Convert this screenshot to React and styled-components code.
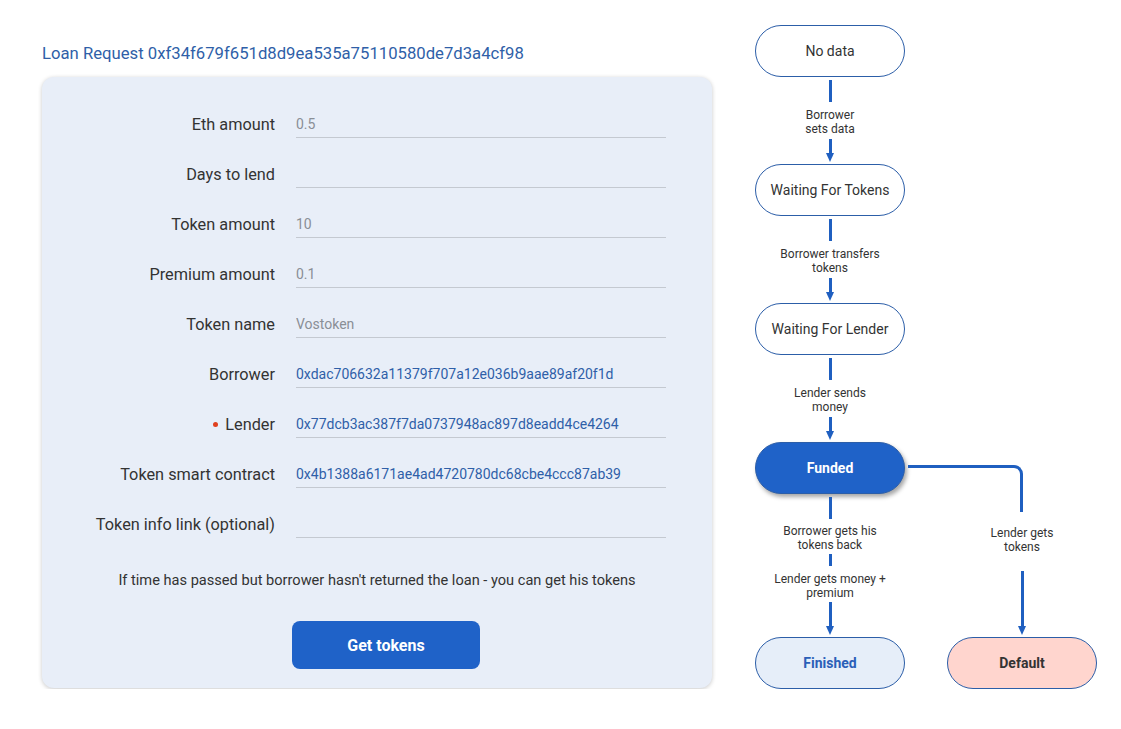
import React from 'react';
import styled, { createGlobalStyle } from 'styled-components';

const GlobalStyle = createGlobalStyle`
  body {
    margin: 0;
    background: #ffffff;
    font-family: Roboto, "Noto Sans", sans-serif;
    color: #333333;
  }
`;

const Page = styled.div`
  display: flex;
  align-items: flex-start;
  gap: 43px;
  padding: 25px 0 0 42px;
`;

const Main = styled.div`
  width: 670px;
`;

const Title = styled.h1`
  margin: 17px 0 11px 0;
  font-size: 16.7px;
  line-height: 24px;
  font-weight: 400;
  color: #2f5fa8;
  white-space: nowrap;
`;

const Card = styled.div`
  display: flex;
  flex-direction: column;
  padding: 22px 46px 19px 20px;
  background: #e8eef8;
  border-radius: 12px;
  box-shadow: 0 1px 4px rgba(0, 0, 0, 0.22);
`;

const Row = styled.div`
  display: grid;
  grid-template-columns: 213px 1fr;
  column-gap: 21px;
  align-items: center;
  height: 50px;
`;

const Label = styled.label`
  display: flex;
  align-items: center;
  justify-content: flex-end;
  font-size: 16.3px;
  color: #333333;
  white-space: nowrap;
`;

const Dot = styled.span`
  width: 5px;
  height: 5px;
  border-radius: 50%;
  background: #e0401f;
  margin-right: 7px;
`;

const Input = styled.input`
  box-sizing: border-box;
  height: 27px;
  padding: 0;
  border: none;
  border-bottom: 1px solid #c4c9d1;
  background: transparent;
  font-family: inherit;
  font-size: 14px;
  color: ${(p) => (p.$address ? '#2f5fa8' : '#8a8f96')};
  outline: none;
`;

const Note = styled.p`
  margin: 21px 0 0 0;
  font-size: 14.6px;
  line-height: 20px;
  text-align: center;
  padding-left: 26px;
  color: #333333;
  white-space: nowrap;
`;

const Button = styled.button`
  align-self: flex-start;
  width: 188px;
  height: 48px;
  margin: 31px 0 0 230px;
  border: none;
  border-radius: 8px;
  background: #1f62c8;
  color: #ffffff;
  font-family: inherit;
  font-size: 16px;
  font-weight: 700;
  cursor: pointer;
`;

const Diagram = styled.div`
  display: grid;
  grid-template-columns: 150px 150px;
  grid-template-rows: 52px 87px 52px 87px 52px 87px 52px 143px 52px;
  column-gap: 42px;
`;

const Node = styled.div`
  grid-column: ${(p) => p.$col || 1};
  box-sizing: border-box;
  display: flex;
  align-items: center;
  justify-content: center;
  border: 1px solid #2c5ea8;
  border-radius: 26px;
  font-size: 14px;
  font-weight: ${(p) => (p.$variant ? 700 : 400)};
  background: ${(p) =>
    p.$variant === 'funded' ? '#1f62c8' : p.$variant === 'finished' ? '#e6eef9' : p.$variant === 'default' ? '#ffd5ce' : '#ffffff'};
  color: ${(p) => (p.$variant === 'funded' ? '#ffffff' : p.$variant === 'finished' ? '#2a5fb8' : '#333333')};
  box-shadow: ${(p) => (p.$variant === 'funded' ? '2px 3px 4px rgba(0, 0, 0, 0.35)' : 'none')};
`;

const Connector = styled.div`
  grid-column: 1;
  display: flex;
  flex-direction: column;
  align-items: center;
  padding: 3px 0 2px 0;
`;

const Line = styled.div`
  width: 3px;
  height: ${(p) => p.$h}px;
  margin-top: ${(p) => p.$mt || 0}px;
  background: #1f5fc0;
`;

const Arrow = styled.div`
  flex: 1;
  display: flex;
  flex-direction: column;
  align-items: center;
  margin-top: ${(p) => p.$mt || 3}px;

  &::before {
    content: '';
    flex: 1;
    width: 3px;
    background: #1f5fc0;
  }

  &::after {
    content: '';
    width: 0;
    height: 0;
    border-left: 4px solid transparent;
    border-right: 4px solid transparent;
    border-top: 9px solid #1f5fc0;
    margin-top: -2px;
  }
`;

const EdgeLabel = styled.div`
  margin-top: ${(p) => p.$mt}px;
  font-size: 12px;
  line-height: 14px;
  text-align: center;
  color: #333333;
  white-space: nowrap;
`;

const Branch = styled.div`
  grid-column: 2;
  grid-row: 7 / span 2;
  display: flex;
  flex-direction: column;
  align-items: center;
  padding: 23px 0 2px 0;
`;

const Elbow = styled.div`
  align-self: flex-start;
  box-sizing: border-box;
  width: 115px;
  height: 47px;
  margin-left: -39px;
  border-top: 3px solid #1f5fc0;
  border-right: 3px solid #1f5fc0;
  border-top-right-radius: 9px;
`;

const fields = [
  { label: 'Eth amount', value: '0.5' },
  { label: 'Days to lend', value: '' },
  { label: 'Token amount', value: '10' },
  { label: 'Premium amount', value: '0.1' },
  { label: 'Token name', value: 'Vostoken' },
  { label: 'Borrower', value: '0xdac706632a11379f707a12e036b9aae89af20f1d', address: true },
  { label: 'Lender', value: '0x77dcb3ac387f7da0737948ac897d8eadd4ce4264', address: true, marked: true },
  { label: 'Token smart contract', value: '0x4b1388a6171ae4ad4720780dc68cbe4ccc87ab39', address: true },
  { label: 'Token info link (optional)', value: '' },
];

const steps = [
  { node: 'No data', edge: ['Borrower', 'sets data'] },
  { node: 'Waiting For Tokens', edge: ['Borrower transfers', 'tokens'] },
  { node: 'Waiting For Lender', edge: ['Lender sends', 'money'] },
];

const Lines = ({ lines }) => lines.map((l, i) => <div key={i}>{l}</div>);

export default function App() {
  return (
    <>
      <GlobalStyle />
      <Page>
        <Main>
          <Title>Loan Request 0xf34f679f651d8d9ea535a75110580de7d3a4cf98</Title>
          <Card>
            {fields.map((f) => (
              <Row key={f.label}>
                <Label>
                  {f.marked && <Dot />}
                  {f.label}
                </Label>
                <Input readOnly value={f.value} $address={f.address} />
              </Row>
            ))}
            <Note>If time has passed but borrower hasn't returned the loan - you can get his tokens</Note>
            <Button>Get tokens</Button>
          </Card>
        </Main>

        <Diagram>
          {steps.map((s) => (
            <React.Fragment key={s.node}>
              <Node>{s.node}</Node>
              <Connector>
                <Line $h={22} />
                <EdgeLabel $mt={6}>
                  <Lines lines={s.edge} />
                </EdgeLabel>
                <Arrow />
              </Connector>
            </React.Fragment>
          ))}
          <Node $variant="funded">Funded</Node>
          <Connector>
            <Line $h={22} />
            <EdgeLabel $mt={5}>
              <Lines lines={['Borrower gets his', 'tokens back']} />
            </EdgeLabel>
            <Line $h={12} $mt={2} />
            <EdgeLabel $mt={6}>
              <Lines lines={['Lender gets money +', 'premium']} />
            </EdgeLabel>
            <Arrow $mt={2} />
          </Connector>
          <Branch>
            <Elbow />
            <EdgeLabel $mt={14}>
              <Lines lines={['Lender gets', 'tokens']} />
            </EdgeLabel>
            <Arrow $mt={17} />
          </Branch>
          <Node $variant="finished">Finished</Node>
          <Node $variant="default" $col={2}>
            Default
          </Node>
        </Diagram>
      </Page>
    </>
  );
}
